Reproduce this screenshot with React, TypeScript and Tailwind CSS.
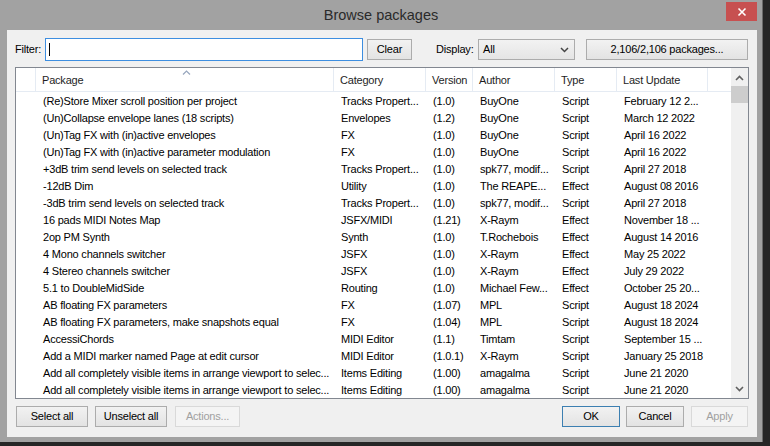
import React from "react";

type Row = [string, string, string, string, string, string];

const rows: Row[] = [
  ["(Re)Store Mixer scroll position per project", "Tracks Propert...", "(1.0)", "BuyOne", "Script", "February 12 2..."],
  ["(Un)Collapse envelope lanes (18 scripts)", "Envelopes", "(1.2)", "BuyOne", "Script", "March 12 2022"],
  ["(Un)Tag FX with (in)active envelopes", "FX", "(1.0)", "BuyOne", "Script", "April 16 2022"],
  ["(Un)Tag FX with (in)active parameter modulation", "FX", "(1.0)", "BuyOne", "Script", "April 16 2022"],
  ["+3dB trim send levels on selected track", "Tracks Propert...", "(1.0)", "spk77, modif...", "Script", "April 27 2018"],
  ["-12dB Dim", "Utility", "(1.0)", "The REAPE...", "Effect", "August 08 2016"],
  ["-3dB trim send levels on selected track", "Tracks Propert...", "(1.0)", "spk77, modif...", "Script", "April 27 2018"],
  ["16 pads MIDI Notes Map", "JSFX/MIDI", "(1.21)", "X-Raym", "Effect", "November 18 ..."],
  ["2op PM Synth", "Synth", "(1.0)", "T.Rochebois", "Effect", "August 14 2016"],
  ["4 Mono channels switcher", "JSFX", "(1.0)", "X-Raym", "Effect", "May 25 2022"],
  ["4 Stereo channels switcher", "JSFX", "(1.0)", "X-Raym", "Effect", "July 29 2022"],
  ["5.1 to DoubleMidSide", "Routing", "(1.0)", "Michael Few...", "Effect", "October 25 20..."],
  ["AB floating FX parameters", "FX", "(1.07)", "MPL", "Script", "August 18 2024"],
  ["AB floating FX parameters, make snapshots equal", "FX", "(1.04)", "MPL", "Script", "August 18 2024"],
  ["AccessiChords", "MIDI Editor", "(1.1)", "Timtam", "Script", "September 15 ..."],
  ["Add a MIDI marker named Page at edit cursor", "MIDI Editor", "(1.0.1)", "X-Raym", "Script", "January 25 2018"],
  ["Add all completely visible items in arrange viewport to selec...", "Items Editing", "(1.00)", "amagalma", "Script", "June 21 2020"],
  ["Add all completely visible items in arrange viewport to selec...", "Items Editing", "(1.00)", "amagalma", "Script", "June 21 2020"],
];

const cols = [
  { w: "w-[298px]", label: "Package" },
  { w: "w-[92px]", label: "Category" },
  { w: "w-[47px]", label: "Version" },
  { w: "w-[82px]", label: "Author" },
  { w: "w-[62px]", label: "Type" },
  { w: "w-[91px]", label: "Last Update" },
];

function Btn({
  children,
  w,
  disabled,
  primary,
}: {
  children: React.ReactNode;
  w: string;
  disabled?: boolean;
  primary?: boolean;
}) {
  return (
    <div
      className={
        "h-[21px] flex items-center justify-center border " +
        w +
        " " +
        (disabled
          ? "border-[#d9d9d9] bg-[#f4f4f4] text-[#a0a0a0]"
          : primary
          ? "border-[#3c7fb1] bg-gradient-to-b from-[#f2f2f2] to-[#e3e3e3] text-black"
          : "border-[#acacac] bg-gradient-to-b from-[#f2f2f2] to-[#e3e3e3] text-black")
      }
    >
      {children}
    </div>
  );
}

export default function App() {
  return (
    <div
      className="w-[770px] h-[446px] bg-[#262626] overflow-hidden relative"
      style={{ fontFamily: '"Liberation Sans", Arial, sans-serif' }}
    >
      <div className="w-[763px] h-[442px] bg-[#a2a2a2] border-r border-[#6b6b6b] flex flex-col">
        {/* Title bar */}
        <div className="h-[30px] relative flex items-center justify-center">
          <span className="text-[14.5px] text-[#2a2a2a] mt-[2px]">Browse packages</span>
          <div className="absolute right-[5px] top-[2px] w-[31px] h-[19px] bg-[#c75050] flex items-center justify-center">
            <svg width="10" height="10" viewBox="0 0 10 10">
              <path d="M1.5 1.5 L8.5 8.5 M8.5 1.5 L1.5 8.5" stroke="white" strokeWidth="1.6" />
            </svg>
          </div>
        </div>
        {/* Client */}
        <div className="ml-[7px] w-[750px] h-[407px] bg-[#f0f0f0] text-[11px] tracking-[-0.2px] text-black flex flex-col">
          {/* Top row */}
          <div className="flex items-center h-[23px] mt-[8px] pl-[8px]">
            <span className="w-[30px]">Filter:</span>
            <div className="w-[318px] h-[23px] border border-[#3d8ee0] bg-white flex items-center pl-[3px]">
              <div className="w-px h-[13px] bg-black" />
            </div>
            <div className="ml-[4px]">
              <Btn w="w-[45px]">Clear</Btn>
            </div>
            <span className="ml-[24px] w-[42px]">Display:</span>
            <div className="w-[97px] h-[21px] border border-[#acacac] bg-gradient-to-b from-[#f2f2f2] to-[#e5e5e5] flex items-center justify-between pl-[4px] pr-[5px]">
              <span>All</span>
              <svg width="9" height="6" viewBox="0 0 9 6">
                <path d="M1 1 L4.5 4.5 L8 1" stroke="#444" strokeWidth="1.5" fill="none" />
              </svg>
            </div>
            <div className="ml-[11px]">
              <Btn w="w-[162px]">2,106/2,106 packages...</Btn>
            </div>
          </div>
          {/* List */}
          <div className="ml-[8px] mt-[6px] w-[734px] h-[332px] border border-[#828790] bg-white flex overflow-hidden">
            <div className="flex-1 flex flex-col overflow-hidden">
              {/* Header */}
              <div className="h-[24px] flex border-b border-[#e5ebf3] shrink-0 relative">
                <div className="w-[20px] border-r border-[#e5ebf3]" />
                {cols.map((c) => (
                  <div
                    key={c.label}
                    className={c.w + " border-r border-[#e5ebf3] pl-[6px] pt-[2px] flex items-center whitespace-nowrap text-[#1e1e1e]"}
                  >
                    {c.label}
                  </div>
                ))}
                <div className="flex-1" />
                <svg className="absolute left-[166px] top-[2px]" width="9" height="5" viewBox="0 0 9 5">
                  <path d="M1 4.5 L4.5 1 L8 4.5" stroke="#97a6bd" strokeWidth="1.2" fill="none" />
                </svg>
              </div>
              {rows.map((r, i) => (
                <div key={i} className="h-[17px] flex items-center shrink-0 pt-[2px]">
                  <div className="w-[20px]" />
                  {r.map((v, j) => (
                    <div key={j} className={cols[j].w + " pl-[7px] whitespace-nowrap overflow-hidden"}>
                      {v}
                    </div>
                  ))}
                </div>
              ))}
            </div>
            {/* Scrollbar */}
            <div className="w-[17px] bg-[#f0f0f0] flex flex-col items-center shrink-0">
              <div className="h-[17px] flex items-center justify-center mt-[1px]">
                <svg width="9" height="6" viewBox="0 0 9 6">
                  <path d="M1 5 L4.5 1.5 L8 5" stroke="#606060" strokeWidth="1.6" fill="none" />
                </svg>
              </div>
              <div className="w-[17px] h-[17px] bg-[#cdcdcd]" />
              <div className="flex-1" />
              <div className="h-[17px] flex items-center justify-center mb-[1px]">
                <svg width="9" height="6" viewBox="0 0 9 6">
                  <path d="M1 1 L4.5 4.5 L8 1" stroke="#606060" strokeWidth="1.6" fill="none" />
                </svg>
              </div>
            </div>
          </div>
          {/* Bottom buttons */}
          <div className="flex items-center mt-[7px] pl-[9px] pr-[9px]">
            <Btn w="w-[72px]">Select all</Btn>
            <div className="ml-[7px]">
              <Btn w="w-[72px]">Unselect all</Btn>
            </div>
            <div className="ml-[8px]">
              <Btn w="w-[65px]" disabled>
                Actions...
              </Btn>
            </div>
            <div className="flex-1" />
            <Btn w="w-[58px]" primary>
              OK
            </Btn>
            <div className="ml-[6px]">
              <Btn w="w-[58px]">Cancel</Btn>
            </div>
            <div className="ml-[7px]">
              <Btn w="w-[57px]" disabled>
                Apply
              </Btn>
            </div>
          </div>
        </div>
      </div>
    </div>
  );
}
